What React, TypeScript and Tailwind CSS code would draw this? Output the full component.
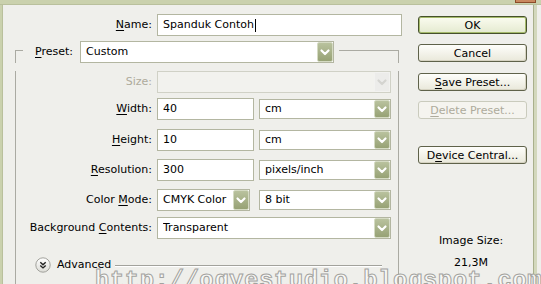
import React from "react";
import clsx from "clsx";

const Chevron = ({ color = "#ffffff" }: { color?: string }) => (
  <svg width="14" height="16" viewBox="0 0 14 16" className="block">
    <path d="M3.5 6.5 L7 10 L10.5 6.5" stroke={color} strokeWidth="2.2" fill="none" strokeLinecap="round" strokeLinejoin="round" />
  </svg>
);

function Drop({ value, className, disabled }: { value: string; className: string; disabled?: boolean }) {
  return (
    <div
      className={clsx(
        "flex items-stretch border pl-[5px]",
        disabled ? "bg-[#f2f2ee] border-[#d0d1c6]" : "bg-white border-[#b3b6a1]",
        className
      )}
    >
      <span className="flex-1 flex items-center whitespace-nowrap overflow-hidden">{value}</span>
      <span
        className={clsx(
          "w-[16px] flex items-center justify-center rounded-[2px] border",
          disabled
            ? "bg-[#ececea] border-[#f2f2f0]"
            : "bg-linear-to-b from-[#b9c29e] to-[#97a275] border-[#d5dbc3]"
        )}
      >
        <Chevron color={disabled ? "#d4d4d0" : "#ffffff"} />
      </span>
    </div>
  );
}

function Field({ children, className }: { children?: React.ReactNode; className: string }) {
  return (
    <div className={clsx("flex items-center bg-white border border-[#b3b6a1] pl-[5px]", className)}>
      {children}
    </div>
  );
}

function Btn({ children, kind = "normal" }: { children: React.ReactNode; kind?: "ok" | "normal" | "off" }) {
  return (
    <button
      className={clsx(
        "h-[18px] w-[109px] rounded-[3px] border flex items-center justify-center leading-none",
        kind === "ok" && "border-[#46512c] bg-linear-to-b from-[#fbfcf0] to-[#e4ead0] shadow-[inset_0_0_0_1px_#a6bb6c]",
        kind === "normal" && "border-[#5f624a] bg-linear-to-b from-[#fefefb] to-[#e9e8da] shadow-[inset_-1px_-1px_0_#d6d3c2]",
        kind === "off" && "border-[#cacbbd] bg-[#f5f4ef] text-[#aeab9c]"
      )}
    >
      {children}
    </button>
  );
}

const U = ({ children }: { children: React.ReactNode }) => (
  <span className="underline underline-offset-[2px] decoration-1">{children}</span>
);

function Row({ label, children, className, dim }: { label: React.ReactNode; children: React.ReactNode; className: string; dim?: boolean }) {
  return (
    <div className={clsx("flex items-center h-[22px]", className)}>
      <div className={clsx("w-[136px] text-right whitespace-nowrap", dim && "text-[#aeab9c]")}>{label}</div>
      <div className="ml-[5px] flex items-center">{children}</div>
    </div>
  );
}

export default function App() {
  return (
    <div className="relative w-[541px] h-[284px] overflow-hidden bg-[#efefeb] text-[11px] text-black font-['DejaVu_Sans',sans-serif]">
      {/* window frame top */}
      <div className="h-[5px] bg-[#cad1ad] border-b border-[#b9c09c]" />
      <div className="absolute top-0 left-[515px] w-[21px] h-[3px] bg-[#c9885e] border-x border-b border-[#8c4b28]" />

      <div className="flex h-[279px]">
        <div className="w-[3px] bg-[#cad1ad] border-r border-[#b9c09c]" />

        {/* left column */}
        <div className="w-[415px]">
          <div className="flex items-center h-[22px] mt-[9px]">
            <div className="w-[149px] text-right"><U>N</U>ame:</div>
            <Field className="ml-[5px] w-[245px] h-[22px]">
              Spanduk Contoh<span className="inline-block w-px h-[13px] bg-black ml-[1px]" />
            </Field>
          </div>

          {/* group box */}
          <div className="mt-[5px] ml-[12px] w-[384px]">
            <div className="flex items-center h-[22px]">
              <div className="self-start mt-[9px] w-[8px] h-[13px] border-l border-t border-[#aaaaa2]" />
              <div className="ml-[12px] w-[45px] whitespace-nowrap"><U>P</U>reset:</div>
              <Drop value="Custom" className="w-[254px] h-[22px]" />
              <div className="self-start mt-[9px] ml-[5px] flex-1 h-[13px] border-t border-r border-[#aaaaa2]" />
            </div>

            <div className="h-[300px] border-x border-[#aaaaa2]">
              <Row label="Size:" dim className="mt-[8px]">
                <Drop value="" disabled className="w-[234px] h-[22px]" />
              </Row>
              <Row label={<><U>W</U>idth:</>} className="mt-[5px]">
                <Field className="w-[97px] h-[22px]">40</Field>
                <Drop value="cm" className="ml-[5px] w-[132px] h-[20px]" />
              </Row>
              <Row label={<><U>H</U>eight:</>} className="mt-[9px]">
                <Field className="w-[97px] h-[22px]">10</Field>
                <Drop value="cm" className="ml-[5px] w-[132px] h-[20px]" />
              </Row>
              <Row label={<><U>R</U>esolution:</>} className="mt-[8px]">
                <Field className="w-[97px] h-[22px]">300</Field>
                <Drop value="pixels/inch" className="ml-[5px] w-[132px] h-[20px]" />
              </Row>
              <Row label={<>Color <U>M</U>ode:</>} className="mt-[8px]">
                <Drop value="CMYK Color" className="w-[93px] h-[22px]" />
                <Drop value="8 bit" className="ml-[9px] w-[132px] h-[20px]" />
              </Row>
              <Row label={<>Background <U>C</U>ontents:</>} className="mt-[6px]">
                <Drop value="Transparent" className="w-[234px] h-[22px]" />
              </Row>

              <div className="flex items-center h-[16px] mt-[18px]">
                <svg width="16" height="16" viewBox="0 0 16 16" className="ml-[19px] block">
                  <defs>
                    <linearGradient id="adv" x1="0" y1="0" x2="0" y2="1">
                      <stop offset="0" stopColor="#ffffff" />
                      <stop offset="1" stopColor="#dcdcd6" />
                    </linearGradient>
                  </defs>
                  <circle cx="8" cy="8" r="7.2" fill="url(#adv)" stroke="#a2a29c" />
                  <path d="M5.3 5.2 L8 7.7 L10.7 5.2 M5.3 8.4 L8 10.9 L10.7 8.4" stroke="#222" strokeWidth="1.4" fill="none" />
                </svg>
                <span className="ml-[6px]">Advanced</span>
                <div className="flex-1 ml-[4px] mr-[16px] h-px bg-[#a2a29c] shadow-[0_1px_0_#ffffff]" />
              </div>
            </div>
          </div>
        </div>

        {/* right column */}
        <div className="w-[115px] flex flex-col">
          <div className="mt-[11px]"><Btn kind="ok">OK</Btn></div>
          <div className="mt-[10px]"><Btn>Cancel</Btn></div>
          <div className="mt-[11px]"><Btn><U>S</U>ave Preset...</Btn></div>
          <div className="mt-[10px]"><Btn kind="off"><U>D</U>elete Preset...</Btn></div>
          <div className="mt-[27px]"><Btn>D<U>e</U>vice Central...</Btn></div>
          <div className="w-[106px] text-center mt-[70px] leading-[14px]">Image Size:</div>
          <div className="w-[106px] text-center mt-[8px] leading-[14px]">21,3M</div>
        </div>

        <div className="w-[4px] bg-[#d3d8bd] border-l border-[#a9b08c]" />
      </div>

      {/* watermark */}
      <div className="absolute left-[95px] top-[269px] whitespace-nowrap leading-none text-[24px] font-bold tracking-[0.5px] text-[#f8f8f6] font-['Liberation_Mono',monospace] [-webkit-text-stroke:1px_#a3a39f]">
        http://ogyestudio.blogspot.com
      </div>
    </div>
  );
}
